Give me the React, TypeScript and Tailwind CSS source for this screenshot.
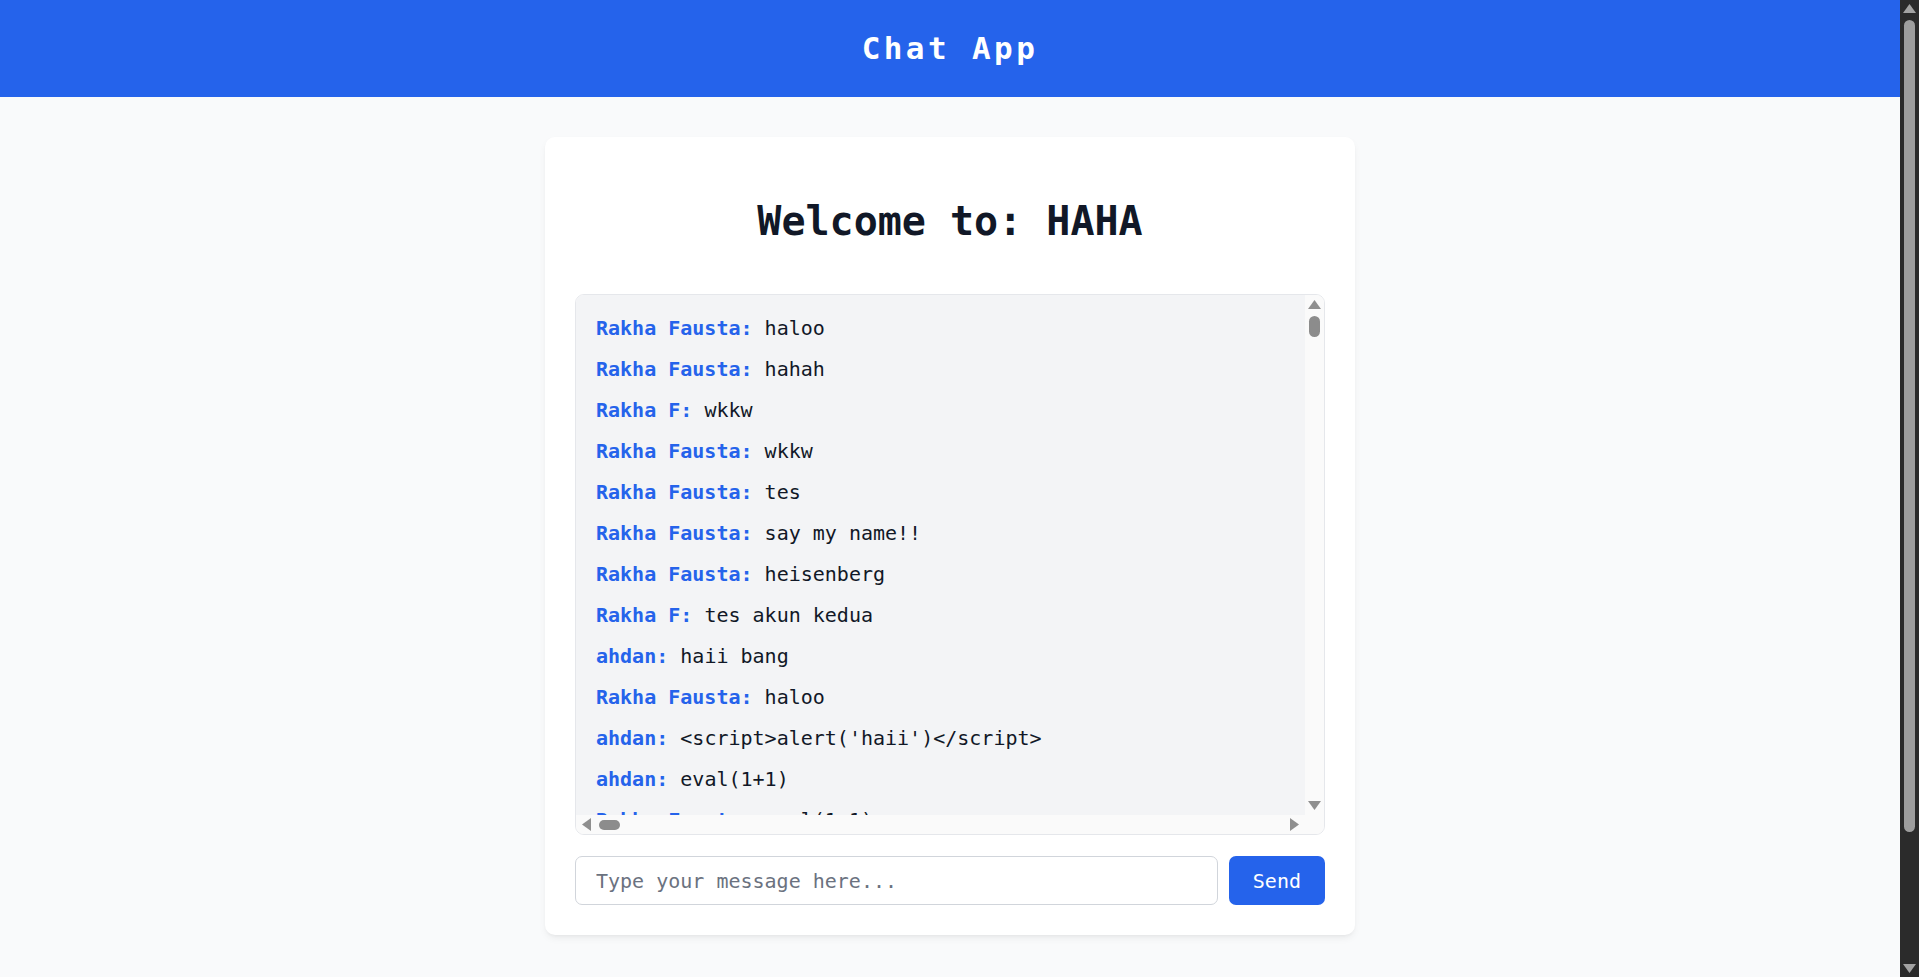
import { useState } from "react";

type Message = { user: string; text: string };

const messages: Message[] = [
  { user: "Rakha Fausta", text: "haloo" },
  { user: "Rakha Fausta", text: "hahah" },
  { user: "Rakha F", text: "wkkw" },
  { user: "Rakha Fausta", text: "wkkw" },
  { user: "Rakha Fausta", text: "tes" },
  { user: "Rakha Fausta", text: "say my name!!" },
  { user: "Rakha Fausta", text: "heisenberg" },
  { user: "Rakha F", text: "tes akun kedua" },
  { user: "ahdan", text: "haii bang" },
  { user: "Rakha Fausta", text: "haloo" },
  { user: "ahdan", text: "<script>alert('haii')</script>" },
  { user: "ahdan", text: "eval(1+1)" },
  { user: "Rakha Fausta", text: "eval(1+1)" },
];

// little triangle used by the scrollbar buttons
function Arrow({ dir, color }: { dir: "up" | "down" | "left" | "right"; color: string }) {
  const pts = {
    up: "0,9 6.5,0 13,9",
    down: "0,0 13,0 6.5,9",
    left: "9,0 9,13 0,6.5",
    right: "0,0 0,13 9,6.5",
  }[dir];
  const vertical = dir === "up" || dir === "down";
  return (
    <svg width={vertical ? 13 : 9} height={vertical ? 9 : 13} viewBox={vertical ? "0 0 13 9" : "0 0 9 13"}>
      <polygon points={pts} fill={color} />
    </svg>
  );
}

export default function App() {
  const [draft, setDraft] = useState("");
  const font = { fontFamily: '"DejaVu Sans Mono", "Liberation Mono", monospace' };

  return (
    <div className="h-screen overflow-hidden flex bg-[#f9fafb]" style={font}>
      <div className="flex-1 min-w-0">
        <header className="h-[97px] bg-[#2563eb] flex items-center justify-center">
          <h1 className="text-white text-[31px] font-bold tracking-[3.4px] leading-none">
            Chat App
          </h1>
        </header>

        <main className="pt-10">
          <div className="mx-auto w-[810px] bg-white rounded-[10px] shadow-[0_4px_8px_-2px_rgba(0,0,0,0.08),0_2px_4px_-2px_rgba(0,0,0,0.05)] p-[30px]">
            <h2 className="text-center text-[40px] leading-[48px] font-bold text-[#111827] pt-[30px] pb-[49px]">
              Welcome to: HAHA
            </h2>

            {/* message list with its own scrollbars */}
            <div className="h-[541px] border border-[#e5e7eb] rounded-[9px] overflow-hidden grid grid-cols-[1fr_19px] grid-rows-[1fr_19px]">
              <div className="bg-[#f3f4f6] overflow-hidden pl-5 pt-[19px]">
                {messages.map((m, i) => (
                  <p key={i} className="text-[20px] leading-[29px] mb-3 text-[#111827] whitespace-nowrap">
                    <span className="font-bold text-[#2563eb]">{m.user}:</span> {m.text}
                  </p>
                ))}
              </div>
              <div className="bg-[#fafafa] flex flex-col items-center pt-[5px] pb-[5px]">
                <Arrow dir="up" color="#8f8f8f" />
                <div className="mt-[7px] w-[11px] h-[21px] rounded-full bg-[#8c8c8c]" />
                <div className="flex-1" />
                <Arrow dir="down" color="#8f8f8f" />
              </div>
              <div className="bg-[#fafafa] flex items-center pl-[6px] pr-[6px]">
                <Arrow dir="left" color="#8f8f8f" />
                <div className="ml-[8px] w-[21px] h-[10px] rounded-full bg-[#8c8c8c]" />
                <div className="flex-1" />
                <Arrow dir="right" color="#8f8f8f" />
              </div>
              <div className="bg-[#fafafa]" />
            </div>

            <div className="flex gap-[11px] mt-[21px]">
              <input
                value={draft}
                onChange={(e) => setDraft(e.target.value)}
                placeholder="Type your message here..."
                className="flex-1 h-[49px] border border-[#d1d5db] rounded-[7px] px-5 text-[20px] bg-white text-[#111827] placeholder:text-[#6b7280] outline-none"
                style={font}
              />
              <button className="h-[49px] px-6 bg-[#2563eb] text-white text-[20px] rounded-[7px] hover:bg-[#1d4ed8]">
                Send
              </button>
            </div>
          </div>
        </main>
      </div>

      {/* page scrollbar */}
      <div className="w-[19px] shrink-0 bg-[#2b2b2b] flex flex-col items-center pt-[4px] pb-[4px]">
        <Arrow dir="up" color="#a3a3a3" />
        <div className="mt-[7px] w-[11px] h-[812px] rounded-full bg-[#9e9e9e]" />
        <div className="flex-1" />
        <Arrow dir="down" color="#a3a3a3" />
      </div>
    </div>
  );
}
